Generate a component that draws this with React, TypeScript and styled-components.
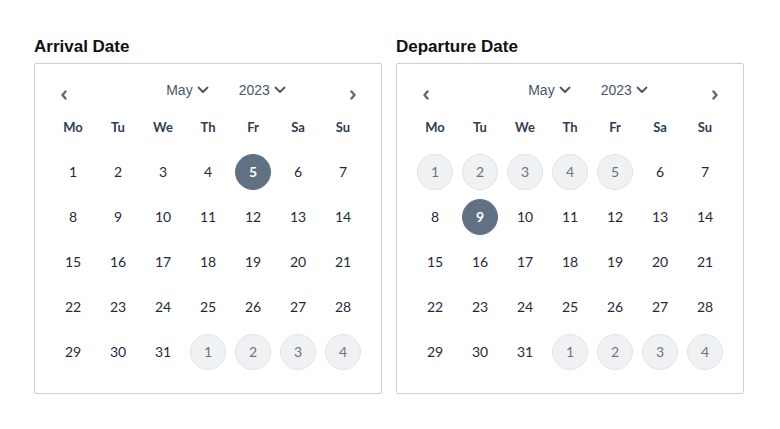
import React from 'react';
import styled, { createGlobalStyle } from 'styled-components';

const GlobalStyle = createGlobalStyle`
  body {
    margin: 0;
    background: #ffffff;
    font-family: Lato, "Open Sans", sans-serif;
  }
`;

const Page = styled.div`
  display: flex;
  gap: 14px;
  padding: 37px 0 0 34px;
`;

const Field = styled.div`
  display: flex;
  flex-direction: column;
`;

const Label = styled.h3`
  margin: 0 0 6px 0;
  font-family: "Liberation Sans", Arial, sans-serif;
  font-size: 17px;
  line-height: 20px;
  font-weight: 700;
  color: #111;
`;

const Box = styled.div`
  width: 315px;
  padding: 0 15.5px 19px 15.5px;
  border: 1px solid #cfcfcf;
  border-radius: 2px;
`;

const Header = styled.div`
  height: 40px;
  display: flex;
  align-items: flex-start;
  padding-top: 18px;
  box-sizing: border-box;
`;

const NavButton = styled.button`
  width: 26px;
  height: 16px;
  margin-top: 5px;
  padding: 0;
  border: none;
  background: none;
  display: flex;
  align-items: center;
  justify-content: center;
  cursor: pointer;
`;

const Selects = styled.div`
  flex: 1;
  display: flex;
  justify-content: center;
  gap: 30px;
  padding-left: 36px;
`;

const Select = styled.div`
  display: flex;
  align-items: center;
  gap: 4px;
  font-family: "Liberation Sans", Arial, sans-serif;
  font-size: 14px;
  line-height: 16px;
  color: #4a5565;
`;

const Grid = styled.div`
  display: grid;
  grid-template-columns: repeat(7, 45px);
  grid-auto-rows: 45px;
`;

const WeekDay = styled.div`
  display: flex;
  align-items: center;
  justify-content: center;
  font-size: 13px;
  font-weight: 700;
  color: #2e3d4f;
`;

const Cell = styled.div`
  display: flex;
  align-items: center;
  justify-content: center;
`;

const Day = styled.div<{ $state: 'normal' | 'selected' | 'disabled' }>`
  width: 36px;
  height: 36px;
  box-sizing: border-box;
  border-radius: 50%;
  display: flex;
  align-items: center;
  justify-content: center;
  font-size: 14px;
  font-weight: ${p => (p.$state === 'selected' ? 700 : 400)};
  color: ${p =>
    p.$state === 'selected' ? '#ffffff' : p.$state === 'disabled' ? '#6b7480' : '#1f2b3a'};
  background: ${p =>
    p.$state === 'selected' ? '#5f7182' : p.$state === 'disabled' ? '#f0f1f3' : 'transparent'};
  border: 1px solid
    ${p => (p.$state === 'disabled' ? '#e1e3e7' : p.$state === 'selected' ? '#5f7182' : 'transparent')};
`;

const Chevron = ({ dir }: { dir: 'left' | 'right' }) => (
  <svg width="8" height="10" viewBox="0 0 8 10">
    <polyline
      points={dir === 'left' ? '5.5,1.5 2.5,5 5.5,8.5' : '2.5,1.5 5.5,5 2.5,8.5'}
      fill="none"
      stroke="#5a6b7c"
      strokeWidth="2.4"
      strokeLinecap="round"
      strokeLinejoin="round"
    />
  </svg>
);

const Caret = () => (
  <svg width="12" height="8" viewBox="0 0 12 8">
    <polyline
      points="1.5,1.5 6,6 10.5,1.5"
      fill="none"
      stroke="#4a5565"
      strokeWidth="1.8"
      strokeLinecap="round"
      strokeLinejoin="round"
    />
  </svg>
);

const WEEK = ['Mo', 'Tu', 'We', 'Th', 'Fr', 'Sa', 'Su'];

// May 2023 starts on Monday; trailing days of June fill the last row
const DAYS: { n: number; outside: boolean }[] = [
  ...Array.from({ length: 31 }, (_, i) => ({ n: i + 1, outside: false })),
  ...[1, 2, 3, 4].map(n => ({ n, outside: true })),
];

interface CalendarProps {
  label: string;
  selected: number;
  minDay?: number;
}

const Calendar: React.FC<CalendarProps> = ({ label, selected, minDay = 1 }) => (
  <Field>
    <Label>{label}</Label>
    <Box>
      <Header>
        <NavButton><Chevron dir="left" /></NavButton>
        <Selects>
          <Select>May <Caret /></Select>
          <Select>2023 <Caret /></Select>
        </Selects>
        <NavButton><Chevron dir="right" /></NavButton>
      </Header>
      <Grid>
        {WEEK.map(w => (
          <WeekDay key={w}>{w}</WeekDay>
        ))}
        {DAYS.map((d, i) => {
          const state = d.outside || d.n < minDay ? 'disabled' : d.n === selected ? 'selected' : 'normal';
          return (
            <Cell key={i}>
              <Day $state={state}>{d.n}</Day>
            </Cell>
          );
        })}
      </Grid>
    </Box>
  </Field>
);

const App: React.FC = () => (
  <>
    <GlobalStyle />
    <Page>
      <Calendar label="Arrival Date" selected={5} />
      <Calendar label="Departure Date" selected={9} minDay={6} />
    </Page>
  </>
);

export default App;
